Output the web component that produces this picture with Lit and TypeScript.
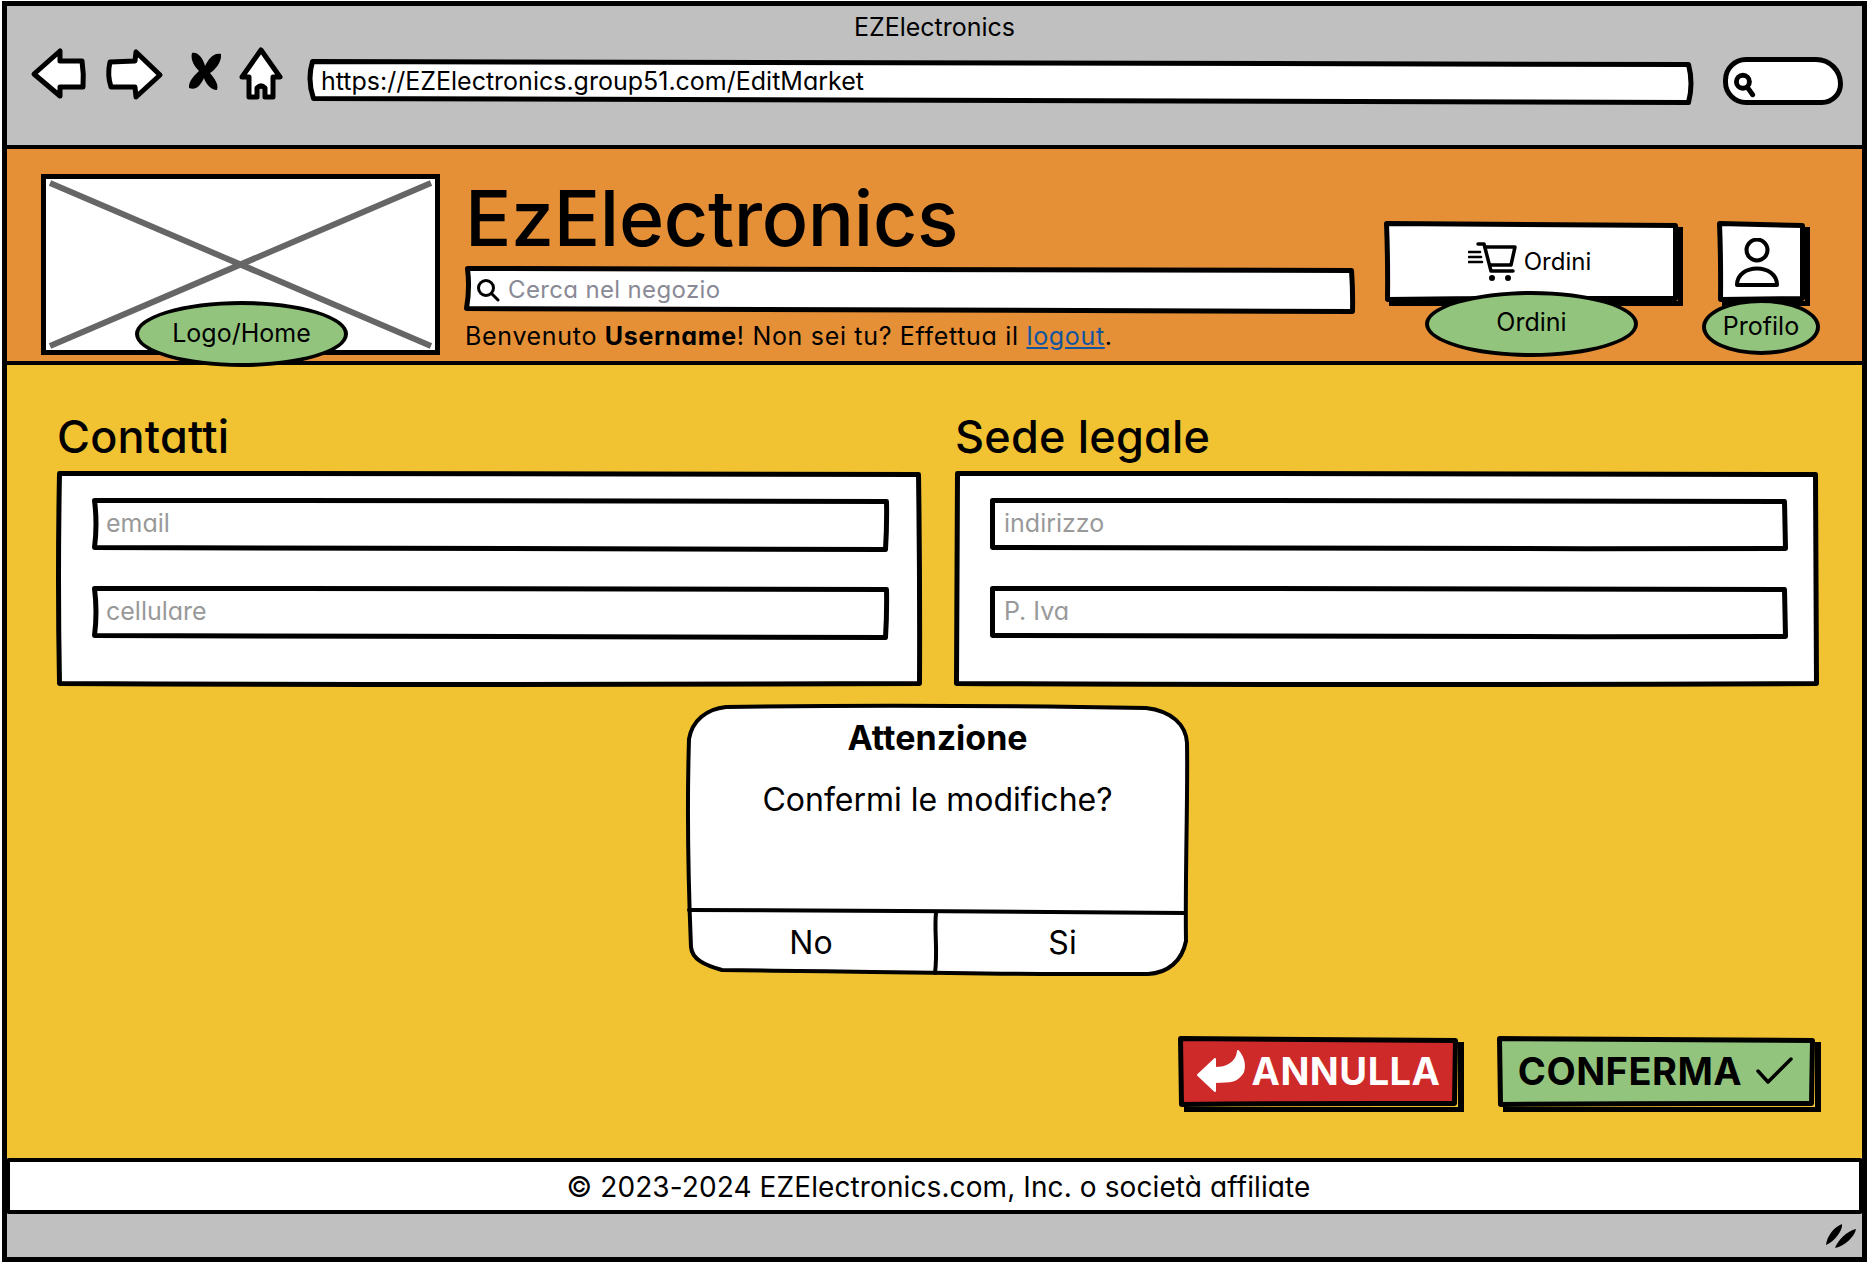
import { LitElement, html, css, svg } from "lit";
import { customElement } from "lit/decorators.js";

const back = svg`<path d="M34 74 L60 51 L60 61 L82 61 Q84 74 83 87 L60 87 L60 96 Z" fill="#fff" stroke="#000" stroke-width="5" stroke-linejoin="round"/>`;
const forward = svg`<path d="M160 75 L136 52 L135 61 L110 62 Q107 75 111 87 L135 87 L136 97 Z" fill="#fff" stroke="#000" stroke-width="5" stroke-linejoin="round"/>`;
const cross = svg`<path d="M191 53 C197 51 203 60 204 66 C207 60 212 52 220 54 C221 62 214 70 209 73 C213 78 218 84 216 90 C209 90 204 82 203 78 C200 84 196 91 188 88 C187 81 195 74 198 71 C194 67 189 60 191 53 Z" fill="#000"/>`;
const home = svg`<path d="M260 50 L279 77 L272 77 L272 97 L264 97 L264 88 Q260 84 256 88 L256 97 L248 97 L248 77 L241 77 Z" fill="#fff" stroke="#000" stroke-width="5" stroke-linejoin="round"/>`;

/* Hand-drawn outline: corner offsets [tlx,tly,trx,try,brx,bry,blx,bly] and a small sag on each side. */
function sk(w: number, h: number, o: number[], sag: number[] = [0, 0, 0, 0], sw = 5, fill = "#fff") {
  const m = sw / 2;
  const [a, b, c, d, e, f, g, i] = o;
  const tl = [m + a, m + b], tr = [w - m + c, m + d], br = [w - m + e, h - m + f], bl = [m + g, h - m + i];
  const p = `M${tl} Q${(tl[0] + tr[0]) / 2} ${(tl[1] + tr[1]) / 2 + sag[0]} ${tr} Q${(tr[0] + br[0]) / 2 + sag[1]} ${(tr[1] + br[1]) / 2} ${br} Q${(br[0] + bl[0]) / 2} ${(br[1] + bl[1]) / 2 + sag[2]} ${bl} Q${(bl[0] + tl[0]) / 2 + sag[3]} ${(bl[1] + tl[1]) / 2} ${tl} Z`;
  return html`<svg class="sk" viewBox="0 0 ${w} ${h}"><path d=${p} fill=${fill} stroke="#000" stroke-width=${sw} stroke-linejoin="round"/></svg>`;
}

@customElement("app-root")
export class AppRoot extends LitElement {
  static styles = css`
    :host { display: block; width: 1868px; height: 1264px; background: #fff; font-family: Inter, "Liberation Sans", sans-serif; font-feature-settings: "cv11"; color: #000; }
    * { box-sizing: border-box; }
    .frame { margin: 1px 1px 0 2px; width: 1865px; height: 1261px; border: 5px solid #000; display: flex; flex-direction: column; }
    .box { position: relative; isolation: isolate; }
    .sk { position: absolute; inset: 0; width: 100%; height: 100%; z-index: -1; overflow: visible; display: block; }
    .chrome { height: 143px; flex: none; background: #c0c0c0; border-bottom: 4px solid #000; }
    .win-title { height: 42px; display: flex; align-items: center; justify-content: center; font-size: 25px; }
    .toolbar { height: 68px; display: flex; align-items: center; padding-left: 23px; }
    .toolbar svg { flex: none; display: block; }
    .i-back { width: 60px; height: 60px; margin-bottom: 14px; }
    .i-fwd { width: 62px; height: 60px; margin: 0 0 14px 14px; }
    .i-x { width: 36px; height: 44px; margin: 0 0 20px 21px; }
    .i-home { width: 48px; height: 56px; margin: 0 0 20px 14px; }
    .url { margin-left: 23px; width: 1386px; height: 44px; display: flex; align-items: center; padding: 0 0 2px 13px; font-size: 25px; }
    .pill { margin: 0 0 2px 29px; width: 120px; height: 48px; border: 5px solid #000; border-radius: 24px 28px 22px 24px; background: #fff; display: flex; align-items: center; padding: 7px 0 0 4px; }
    .pill svg { width: 24px; height: 26px; }

    .store { height: 216px; flex: none; background: #e58f37; border-bottom: 4px solid #000; display: flex; padding: 25px 0 0 34px; }
    .logo { position: relative; width: 399px; height: 181px; border: 5px solid #000; background: #fff; flex: none; }
    .logo svg { width: 100%; height: 100%; display: block; }
    .badge { position: absolute; background: #93c47d; border: 4px solid #000; border-radius: 50%; display: flex; align-items: center; justify-content: center; font-size: 25px; white-space: nowrap; padding-bottom: 3px; }
    .b-logo { left: 89px; top: 122px; width: 213px; height: 66px; }
    .b-ord { left: 41px; top: 69px; width: 213px; height: 66px; padding-bottom: 5px; }
    .b-prof { left: -15px; top: 77px; width: 118px; height: 56px; padding-bottom: 3px; }
    .mid { width: 890px; margin-left: 25px; flex: none; display: flex; flex-direction: column; }
    .brand { height: 93px; font-size: 77px; line-height: 90px; font-weight: 500; margin-top: -1px; padding-left: 0; letter-spacing: -.35px; white-space: nowrap; }
    .search { height: 47px; display: flex; align-items: center; padding-left: 11px; gap: 8px; font-size: 24px; letter-spacing: .35px; color: #8a8a96; }
    .search > svg:not(.sk) { width: 24px; height: 24px; flex: none; }
    .welcome { font-size: 25px; letter-spacing: .68px; margin-top: 6px; white-space: nowrap; line-height: 34px; }
    .welcome a { color: #1155a0; text-decoration: underline; }
    .act { position: relative; isolation: isolate; height: 79px; margin-top: 48px; box-shadow: 5px 5px 0 #000; flex: none; display: flex; align-items: center; justify-content: center; }
    .orders { width: 294px; margin-left: 29px; gap: 6px; font-size: 24px; padding-right: 3px; }
    .orders > svg:not(.sk) { width: 50px; height: 42px; }
    .profile { width: 88px; margin-left: 39px; }
    .profile > svg:not(.sk) { width: 46px; height: 50px; margin: 3px 8px 0 0; }

    main { flex: 1; background: #f1c232; padding: 50px 0 0 50px; display: flex; flex-direction: column; min-height: 0; }
    .cols { display: grid; grid-template-columns: 864px 864px; column-gap: 34px; }
    h2 { margin: 0; height: 56px; font-size: 45px; line-height: 44px; font-weight: 500; letter-spacing: .2px; white-space: nowrap; }
    .panel { height: 215px; padding: 27px 32px 0 35px; display: flex; flex-direction: column; gap: 35px; }
    .field { height: 53px; display: flex; align-items: center; padding: 0 0 4px 14px; font-size: 25px; color: #999; }
    .dialog { align-self: flex-start; margin: 19px 0 0 629px; width: 503px; height: 270px; display: flex; flex-direction: column; }
    .d-title { height: 56px; padding-top: 8px; display: flex; align-items: center; justify-content: center; font-size: 34px; font-weight: 700; }
    .d-body { flex: 1; text-align: center; font-size: 32px; line-height: 40px; padding-top: 19px; }
    .d-btns { height: 62px; padding-bottom: 4px; flex: none; display: grid; grid-template-columns: 250px 1fr; font-size: 32px; }
    .d-btns div { display: flex; align-items: center; justify-content: center; }
    .actions { display: flex; margin: 62px 0 0 1121px; gap: 39px; }
    .btn { position: relative; isolation: isolate; height: 70px; padding-bottom: 2px; box-shadow: 6px 5px 0 #000; display: flex; align-items: center; justify-content: center; font-size: 38px; font-weight: 700; letter-spacing: .5px; }
    .cancel { width: 280px; color: #fff; gap: 6px; }
    .cancel > svg:not(.sk) { width: 50px; height: 44px; }
    .confirm { width: 318px; gap: 14px; }
    .confirm > svg:not(.sk) { width: 38px; height: 28px; }

    .copy { height: 56px; flex: none; margin-inline: -1px; border: 4px solid #000; background: #fff; display: flex; align-items: center; justify-content: center; padding: 2px 0 0 8px; font-size: 28px; letter-spacing: .1px; border-radius: 3px; }
    .status { height: 43px; flex: none; background: #c0c0c0; display: flex; align-items: center; justify-content: flex-end; padding-right: 5px; }
    .status svg { width: 32px; height: 26px; }
  `;

  render() {
    return html`
      <div class="frame">
        <header class="chrome">
          <div class="win-title">EZElectronics</div>
          <div class="toolbar">
            <svg class="i-back" viewBox="30 45 60 60">${back}</svg>
            <svg class="i-fwd" viewBox="104 45 62 60">${forward}</svg>
            <svg class="i-x" viewBox="186 50 36 44">${cross}</svg>
            <svg class="i-home" viewBox="236 44 48 56">${home}</svg>
            <div class="url box">
              ${sk(1386, 44, [2, -1, -3, 2, -3, 1, 3, -3], [0, 5, 0, -6])}
              https://EZElectronics.group51.com/EditMarket
            </div>
            <div class="pill">
              <svg viewBox="0 0 22 24"><circle cx="10" cy="9" r="6" fill="none" stroke="#000" stroke-width="4.5"/><path d="M14 14 L19 21" stroke="#000" stroke-width="4.5" stroke-linecap="round"/></svg>
            </div>
          </div>
        </header>

        <section class="store">
          <div class="logo">
            <svg viewBox="0 0 389 171" preserveAspectRatio="none">
              <path d="M4 4 L385 167 M385 4 L4 167" stroke="#666" stroke-width="6" fill="none"/>
            </svg>
            <div class="badge b-logo">Logo/Home</div>
          </div>
          <div class="mid">
            <div class="brand">EzElectronics</div>
            <div class="search box">
              ${sk(890, 47, [0, 0, -1, 2, 0, 1, -1, -2], [0, 1, 1, 3])}
              <svg viewBox="0 0 24 24" fill="none" stroke="#000" stroke-width="3" stroke-linecap="round"><circle cx="10" cy="10" r="7.5"/><path d="M16 16 L22 22"/></svg>
              Cerca nel negozio
            </div>
            <div class="welcome">Benvenuto <b>Username</b>! Non sei tu? Effettua il <a>logout</a>.</div>
          </div>
          <div class="act orders">
            ${sk(294, 79, [0, -1, 0, 1, 0, 0, 1, 1], [0, 0, -1, 1])}
            <svg viewBox="0 0 50 42" fill="none" stroke="#000" stroke-width="3.5" stroke-linecap="round" stroke-linejoin="round">
              <path d="M10 3 H16 L23 30 H45"/><path d="M17 6 H47 L43 24 H22"/>
              <path d="M1 11 H12 M1 16 H13 M1 21 H14" stroke-width="2.6"/>
              <circle cx="24" cy="37" r="3" fill="#000" stroke="none"/><circle cx="40" cy="37" r="3" fill="#000" stroke="none"/>
            </svg>
            Ordini
            <div class="badge b-ord">Ordini</div>
          </div>
          <div class="act profile">
            ${sk(88, 79, [0, -1, 0, 1, 0, 0, 1, 1], [0, 0, 0, 1])}
            <svg viewBox="0 0 46 50" fill="none" stroke="#000" stroke-width="4" stroke-linejoin="round"><circle cx="23" cy="12" r="10.5"/><path d="M3 47 C3 25 43 25 43 47 Z"/></svg>
            <div class="badge b-prof">Profilo</div>
          </div>
        </section>

        <main>
          <div class="cols">
            <div>
              <h2>Contatti</h2>
              <div class="panel box">
                ${sk(864, 215, [0, 0, 0, 1, 1, 0, 0, 0], [-1, 1, 2, -2])}
                <div class="field box">${sk(797, 53, [0, 0, 0, 1, -1, 1, 0, -1], [-1, 1, 1, 3])}email</div>
                <div class="field box">${sk(797, 53, [0, 0, 0, 1, -1, 1, 0, -1], [-1, 1, 1, 3])}cellulare</div>
              </div>
            </div>
            <div>
              <h2>Sede legale</h2>
              <div class="panel box">
                ${sk(864, 215, [0, 0, -1, 1, 0, 0, -1, 0], [-1, 0, 2, 0])}
                <div class="field box">${sk(797, 53, [0, 0, 0, 1, 1, 0, 0, -1], [-1, 0, 1, 0])}indirizzo</div>
                <div class="field box">${sk(797, 53, [0, 0, 0, 1, 1, 0, 0, -1], [-1, 0, 1, 0])}P. Iva</div>
              </div>
            </div>
          </div>
          <div class="dialog box">
            <svg class="sk" viewBox="0 0 503 270" fill="none" stroke="#000" stroke-linecap="round">
              <path d="M40 2 C170 0 340 1 460 3 C486 6 500 20 501 38 C502 90 499 170 500 236 C496 256 482 268 462 269 C320 270 170 266 36 265 C18 260 6 254 5 242 C2 170 1 100 3 34 C6 16 20 4 40 2 Z" fill="#fff" stroke-width="4"/>
              <path d="M3 205 C160 206 340 206 499 208" stroke-width="4"/>
              <path d="M250 208 C248 225 252 245 249 268" stroke-width="4"/>
            </svg>
            <div class="d-title">Attenzione</div>
            <div class="d-body">Confermi le modifiche?</div>
            <div class="d-btns"><div>No</div><div>Si</div></div>
          </div>
          <div class="actions">
            <div class="btn cancel">
              ${sk(280, 70, [0, -1, 0, 1, -1, -1, 1, 0], [0, 0, -1, 0], 5, "#cf2a2a")}
              <svg viewBox="0 0 50 44"><path d="M2 26 L19 10 L19 19 C30 19 41 14 42 2 C49 10 50 22 44 27 C40 32 35 33 19 33 L19 42 Z" fill="#fff" stroke="#fff" stroke-width="2" stroke-linejoin="round"/></svg>
              ANNULLA
            </div>
            <div class="btn confirm">
              ${sk(318, 70, [0, -1, 0, 1, -1, -1, 1, 0], [0, 0, -1, 0], 5, "#93c47d")}
              CONFERMA
              <svg viewBox="0 0 38 28" fill="none" stroke="#000" stroke-width="3.5" stroke-linecap="round" stroke-linejoin="round"><path d="M2 14 L12 25 L35 2"/></svg>
            </div>
          </div>
        </main>

        <footer class="copy">© 2023-2024 EZElectronics.com, Inc. o società affiliate</footer>
        <div class="status">
          <svg viewBox="0 0 32 26"><path d="M1 22 C2 13 9 4 17 1 C18 7 10 18 1 22 Z M10 25 C13 17 22 8 31 6 C30 13 20 23 10 25 Z" fill="#000"/></svg>
        </div>
      </div>
    `;
  }
}
